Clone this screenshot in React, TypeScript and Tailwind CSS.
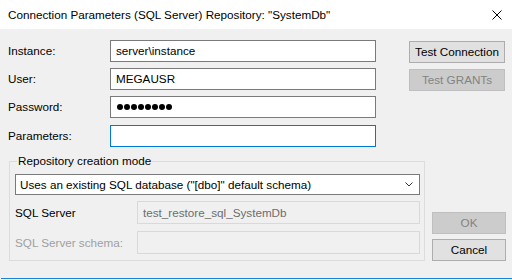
import React from "react";

const font = { fontFamily: '"Liberation Sans", Arial, sans-serif' };

const Field: React.FC<{ label: string; children: React.ReactNode; className?: string }> = ({
  label,
  children,
  className,
}) => (
  <div className={`flex items-center h-[22px] ${className ?? ""}`}>
    <span className="w-[102px] text-[11.7px] text-black">{label}</span>
    {children}
  </div>
);

const TextBox: React.FC<{ value?: string; focused?: boolean }> = ({ value, focused }) => (
  <div
    className={`w-[266px] h-[22px] bg-white border flex items-center pl-[5px] text-[11.7px] text-black ${
      focused ? "border-[#0078d7]" : "border-[#7a7a7a]"
    }`}
  >
    {value}
  </div>
);

const Btn: React.FC<{ label: string; disabled?: boolean; className?: string }> = ({
  label,
  disabled,
  className,
}) => (
  <div
    className={`h-[22px] border flex items-center justify-center text-[11.7px] ${
      disabled
        ? "bg-[#cccccc] border-[#bfbfbf] text-[#838383]"
        : "bg-[#e1e1e1] border-[#adadad] text-black"
    } ${className ?? ""}`}
  >
    {label}
  </div>
);

export default function App() {
  return (
    <div className="w-[512px] h-[280px] bg-[#f0f0f0] flex flex-col overflow-hidden" style={font}>
      <div className="h-[29px] bg-white flex items-center justify-between pl-2 pr-[10px] shrink-0">
        <span className="text-[11.7px] text-black">
          Connection Parameters (SQL Server) Repository: "SystemDb"
        </span>
        <svg width="10" height="10" viewBox="0 0 10 10">
          <path d="M0.5 0.5 L9.5 9.5 M9.5 0.5 L0.5 9.5" stroke="#000" strokeWidth="1" />
        </svg>
      </div>

      <div className="flex pt-[11px] pl-2">
        <div className="flex flex-col">
          <Field label="Instance:" className="mb-[6px]">
            <TextBox value="server\instance" />
          </Field>
          <Field label="User:" className="mb-[6px]">
            <TextBox value="MEGAUSR" />
          </Field>
          <Field label="Password:" className="mb-[7px]">
            <div className="w-[266px] h-[22px] bg-white border border-[#7a7a7a] flex items-center pl-[6px] gap-[1px]">
              {Array.from({ length: 8 }).map((_, i) => (
                <span key={i} className="w-[6px] h-[6px] rounded-full bg-black" />
              ))}
            </div>
          </Field>
          <Field label="Parameters:">
            <TextBox focused />
          </Field>
        </div>
        <div className="flex flex-col ml-[33px] pt-[1px] gap-[6px]">
          <Btn label="Test Connection" className="w-[96px]" />
          <Btn label="Test GRANTs" disabled className="w-[96px]" />
        </div>
      </div>

      <div className="flex pl-[9px] mt-[6px]">
        <fieldset className="w-[416px] border border-[#dcdcdc] pl-[5px] pb-[4px]">
          <legend className="ml-[2px] px-[1px] text-[11.7px] text-black leading-[16px]">
            Repository creation mode
          </legend>
          <div className="mt-[5px] w-[405px] h-[21px] bg-white border border-[#7a7a7a] flex items-center justify-between pl-[4px] pr-[6px] text-[11.7px] text-black">
            <span>Uses an existing SQL database ("[dbo]" default schema)</span>
            <svg width="8" height="5" viewBox="0 0 8 5">
              <path d="M0.5 0.5 L4 4 L7.5 0.5" stroke="#333" strokeWidth="1" fill="none" />
            </svg>
          </div>
          <div className="mt-[6px] flex items-center h-[23px]">
            <span className="w-[122px] text-[11.7px] text-black">SQL Server</span>
            <div className="w-[283px] h-[23px] border border-[#d9d9d9] flex items-center pl-[5px] text-[11.7px] text-[#6d6d6d]">
              test_restore_sql_SystemDb
            </div>
          </div>
          <div className="mt-[7px] flex items-center h-[23px]">
            <span className="w-[122px] text-[11.7px] text-[#a0a0a0]">SQL Server schema:</span>
            <div className="w-[283px] h-[23px] border border-[#d9d9d9]" />
          </div>
        </fieldset>
        <div className="flex flex-col ml-[7px] pt-[59px] gap-[5px]">
          <Btn label="OK" disabled className="w-[74px]" />
          <Btn label="Cancel" className="w-[74px]" />
        </div>
      </div>

      <div className="mt-auto mb-[1px] ml-[1px] h-[1px] bg-[#1883d7]" />
    </div>
  );
}
